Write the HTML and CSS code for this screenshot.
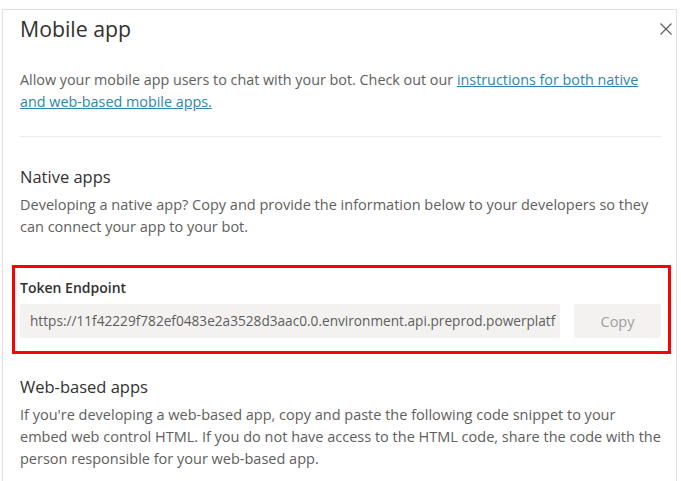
FILE: index.html
```html
<!DOCTYPE html>
<html lang="en">
<head>
<meta charset="utf-8">
<title>Mobile app</title>
<link rel="stylesheet" href="styles.css">
</head>
<body>
<div class="panel">
  <div class="header">
    <h1 class="title">Mobile app</h1>
    <button class="close" aria-label="Close">
      <svg width="12" height="12" viewBox="0 0 12 12"><path d="M0.5 0.5 L11.5 11.5 M11.5 0.5 L0.5 11.5" stroke="#605e5c" stroke-width="1.2" fill="none"/></svg>
    </button>
  </div>
  <p class="text intro">Allow your mobile app users to chat with your bot. Check out our <a href="#" class="link">instructions for both native and web-based mobile apps.</a></p>
  <hr class="sep">
  <h2 class="heading">Native apps</h2>
  <p class="text">Developing a native app? Copy and provide the information below to your developers so they can connect your app to your bot.</p>
  <div class="highlight">
    <div class="label">Token Endpoint</div>
    <div class="field-row">
      <div class="field"><span class="field-text">https://11f42229f782ef0483e2a3528d3aac0.0.environment.api.preprod.powerplatf</span></div>
      <button class="copy">Copy</button>
    </div>
  </div>
  <h2 class="heading web">Web-based apps</h2>
  <p class="text">If you're developing a web-based app, copy and paste the following code snippet to your embed web control HTML. If you do not have access to the HTML code, share the code with the person responsible for your web-based app.</p>
</div>
</body>
</html>
```
FILE: styles.css
```css
html, body {
  margin: 0;
  padding: 0;
  background: #ffffff;
  overflow: hidden;
}
body {
  font-family: "Open Sans", "Noto Sans", Arial, sans-serif;
  color: #605e5c;
}
.panel {
  margin: 9px 0 0 2px;
  width: 675px;
  height: 480px;
  box-sizing: border-box;
  border: 1px solid #e1dfdd;
  border-bottom: none;
  padding: 5px 15px 0 17px;
}
.header {
  display: flex;
  justify-content: space-between;
  align-items: flex-start;
}
.title {
  margin: 0;
  font-size: 21.3px;
  line-height: 28px;
  font-weight: 400;
  color: #323130;
}
.close {
  margin: 8px -11px 0 0;
  padding: 0;
  border: none;
  background: none;
  width: 12px;
  height: 12px;
  display: flex;
}
.text {
  margin: 5px 0 0 0;
  font-size: 14.5px;
  line-height: 22px;
  color: #605e5c;
}
.intro {
  margin-top: 26px;
  font-size: 14.35px;
}
.link {
  color: #2e86a8;
  text-decoration: underline;
}
.sep {
  margin: 23px 0 0 0;
  border: none;
  border-top: 1px solid #edebe9;
  height: 0;
}
.heading {
  margin: 28px 0 0 0;
  font-size: 16.5px;
  line-height: 24px;
  font-weight: 400;
  color: #323130;
}
.heading.web {
  margin-top: 21px;
}
.highlight {
  margin: 27px -10px 0 -8px;
  border: 3px solid #ff0000;
  padding: 10px 7px 13px 5px;
}
.label {
  font-size: 14px;
  line-height: 20px;
  font-weight: 600;
  color: #323130;
}
.field-row {
  margin-top: 6px;
  display: flex;
  gap: 14px;
}
.field {
  width: 540px;
  flex: none;
  height: 34px;
  box-sizing: border-box;
  background: #f3f2f1;
  border-radius: 2px;
  padding: 0 10px;
  font-size: 13.65px;
  line-height: 34px;
  color: #605e5c;
  white-space: nowrap;
  overflow: hidden;
}
.copy {
  width: 87px;
  flex: none;
  height: 34px;
  border: none;
  border-radius: 2px;
  background: #f3f2f1;
  color: #a19f9d;
  font-family: inherit;
  font-size: 14.5px;
  padding: 0;
}
```
